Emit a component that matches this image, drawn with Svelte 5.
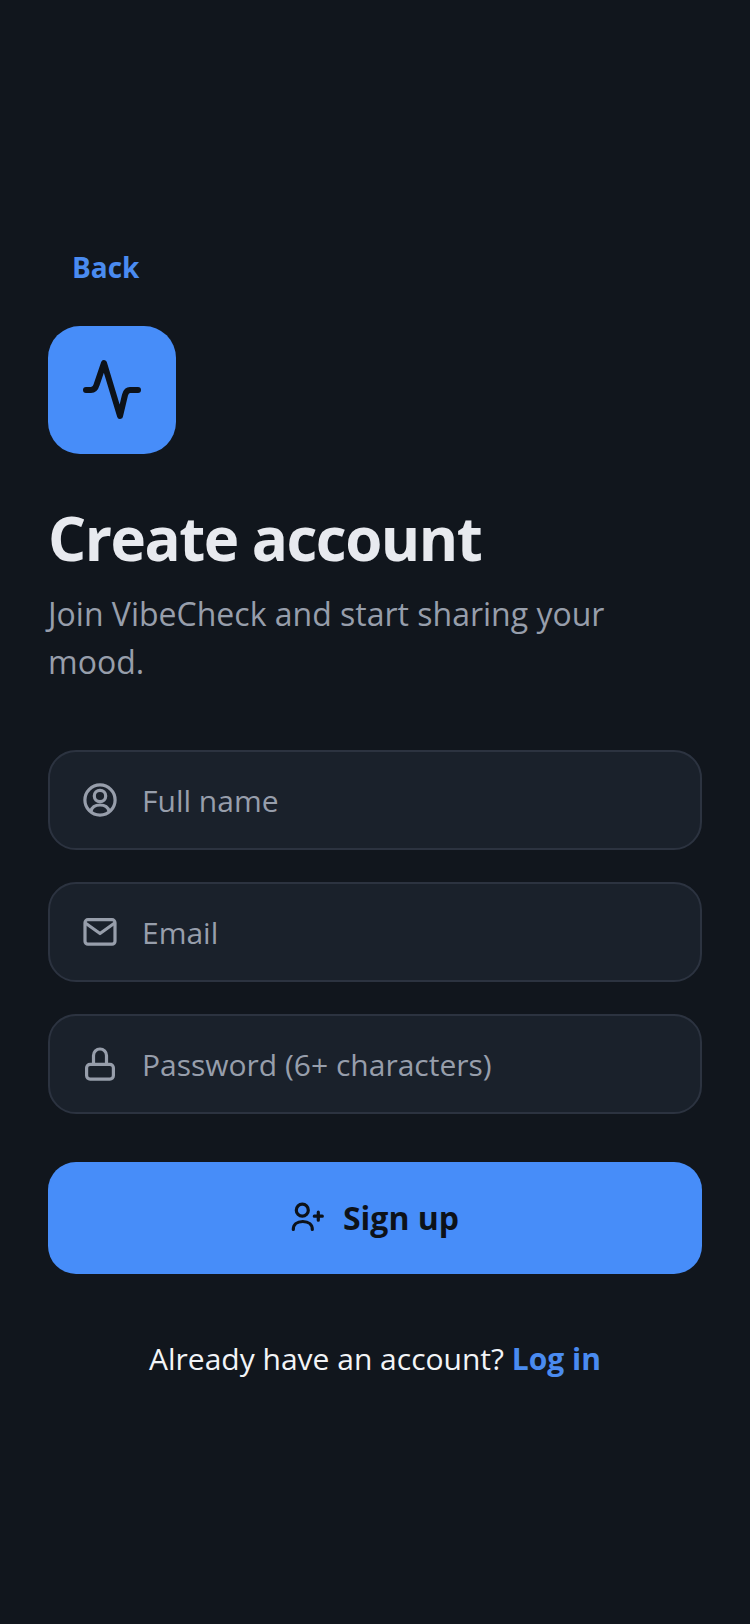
<script>
    const fields = [
        { placeholder: 'Full name', icon: 'user' },
        { placeholder: 'Email', icon: 'mail' },
        { placeholder: 'Password (6+ characters)', icon: 'lock' }
    ];
</script>

<style>
    :global(body) {
        margin: 0;
        background: #11161d;
        font-family: "Open Sans", "Noto Sans", sans-serif;
    }

    .screen {
        height: 1624px;
        box-sizing: border-box;
        padding: 243px 48px 0;
        display: flex;
        flex-direction: column;
        background: #11161d;
    }

    .back {
        align-self: flex-start;
        padding: 0 24px;
        height: 48px;
        line-height: 48px;
        font-size: 28px;
        font-weight: 700;
        color: #4a8bf0;
    }

    .logo {
        width: 128px;
        height: 128px;
        margin-top: 35px;
        border-radius: 32px;
        background: #478df9;
        display: flex;
        align-items: center;
        justify-content: center;
    }

    h1 {
        margin: 44px 0 0;
        font-size: 60px;
        line-height: 80px;
        font-weight: 700;
        letter-spacing: -1.5px;
        color: #e8eaef;
    }

    .sub {
        margin: 12px 0 0;
        font-size: 32px;
        line-height: 48px;
        color: #979eab;
    }

    .fields {
        margin-top: 64px;
        display: flex;
        flex-direction: column;
        gap: 32px;
    }

    .field {
        height: 100px;
        box-sizing: border-box;
        border: 2px solid #2c3340;
        border-radius: 28px;
        background: #1a212b;
        display: flex;
        align-items: center;
        padding: 0 32px;
        gap: 24px;
        font-size: 30px;
        color: #979eab;
    }

    .field svg {
        flex: none;
    }

    .submit {
        margin-top: 48px;
        height: 112px;
        border-radius: 28px;
        background: #478df9;
        display: flex;
        align-items: center;
        justify-content: center;
        gap: 16px;
        font-size: 32px;
        font-weight: 700;
        color: #0d1219;
    }

    .submit span {
        padding-bottom: 2px;
    }

    .foot {
        margin: 61px 0 0;
        text-align: center;
        font-size: 30px;
        line-height: 48px;
        color: #f2f4f7;
    }

    .foot b {
        font-weight: 700;
        color: #4a8bf0;
    }
</style>

<div class="screen">
    <div class="back">Back</div>
    <div class="logo">
        <svg width="64" height="64" viewBox="0 0 64 64" fill="none" stroke="#0d1219" stroke-width="6" stroke-linecap="round" stroke-linejoin="round">
            <path d="M6 32h5c3 0 4.500-1.500 5.500-5L24 5l16 53 5-21c1-3.500 2.500-5 5-5h8" />
        </svg>
    </div>
    <h1>Create account</h1>
    <p class="sub">Join VibeCheck and start sharing your mood.</p>

    <div class="fields">
        {#each fields as field}
            <div class="field">
                <svg width="36" height="36" viewBox="0 0 36 36" fill="none" stroke="#979eab" stroke-width="3.2" stroke-linecap="round" stroke-linejoin="round">
                    {#if field.icon === 'user'}
                        <circle cx="18" cy="18" r="15.100" />
                        <circle cx="18" cy="14" r="5.700" />
                        <path d="M9 29c1-4 4.500-6 9-6s8 2 9 6" />
                    {:else if field.icon === 'mail'}
                        <rect x="3" y="5.700" width="30" height="24.500" rx="3" />
                        <path d="M4 9.500l14 10 14-10" />
                    {:else}
                        <rect x="4.600" y="18.300" width="26.800" height="14.800" rx="3.500" />
                        <path d="M11.500 18v-8.500a6.500 6.500 0 0 1 13 0v8.500" />
                    {/if}
                </svg>
                <span>{field.placeholder}</span>
            </div>
        {/each}
    </div>

    <div class="submit">
        <svg width="36" height="36" viewBox="0 0 36 36" fill="none" stroke="#0d1219" stroke-width="3.2" stroke-linecap="round" stroke-linejoin="round">
            <circle cx="11.300" cy="10.200" r="6" />
            <path d="M2.300 29.500c0-5 3.500-8 9.500-8s9.500 3 9.500 8" />
            <path d="M27.300 12.200v8M23.300 16.200h8" />
        </svg>
        <span>Sign up</span>
    </div>

    <p class="foot">Already have an account? <b>Log in</b></p>
</div>
